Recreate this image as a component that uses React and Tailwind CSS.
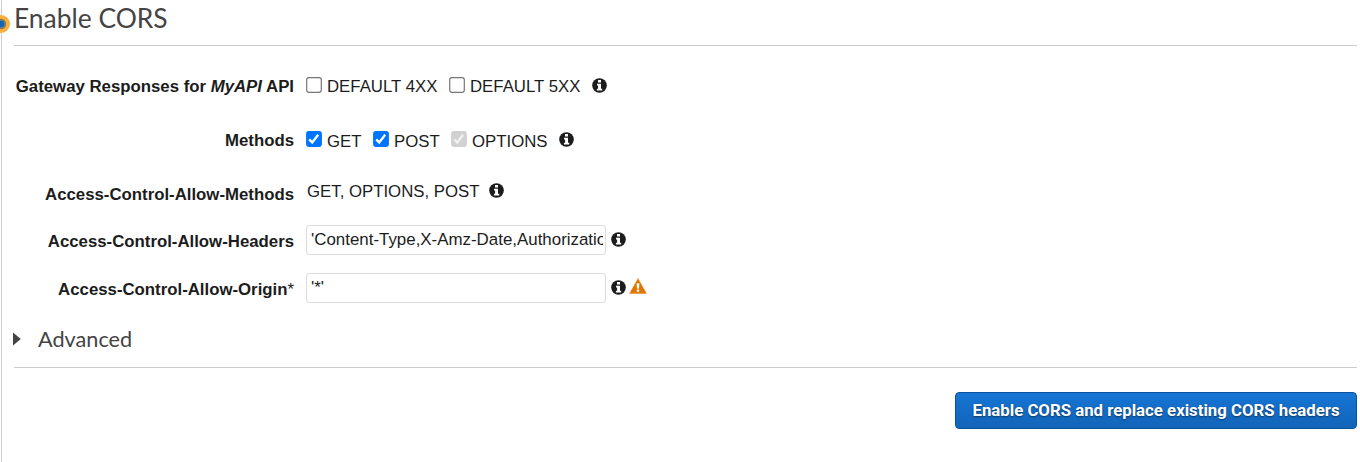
function InfoIcon({ className = "" }) {
  return (
    <svg viewBox="0 0 15 15" className={`size-[15px] shrink-0 ${className}`}>
      <circle cx="7.5" cy="7.5" r="7.3" fill="#1c1c1c" />
      <path d="M6 2.1h3v2.3H6zM5 5.7h4v5h1.2v1.9H4.9v-1.9h1.2V7.5H5z" fill="#fff" />
    </svg>
  );
}

function WarningIcon() {
  return (
    <svg viewBox="0 0 18 16" className="-mt-[6px] ml-[3px] h-4 w-[18px] shrink-0">
      <path d="M9 .4 17.4 15.6H.6z" fill="#e07700" stroke="#e07700" strokeWidth=".4" strokeLinejoin="round" />
      <path d="M7.6 5.3h2.8L10 10.6H8zM7.8 11.6h2.4v2.2H7.8z" fill="#fff" />
    </svg>
  );
}

function Check({ state = "off", className = "" }) {
  const fill = { off: "#fff", on: "#0075ff", disabled: "#d1d1d1" }[state];
  const edge = { off: "#767676", on: "#0075ff", disabled: "#d1d1d1" }[state];
  return (
    <svg viewBox="0 0 16 16" className={`size-4 shrink-0 ${className}`}>
      <rect x=".7" y=".7" width="14.6" height="14.6" rx="2.2" fill={fill} stroke={edge} strokeWidth="1.2" />
      {state !== "off" && (
        <path d="m3.2 8.4 3 3 6-7.6" fill="none" stroke={state === "on" ? "#fff" : "#f0f0f0"} strokeWidth="2.3" />
      )}
    </svg>
  );
}

function Row({ label, height, shift = "pt-0.5", children }) {
  return (
    <div className={`flex items-center ${height}`}>
      <div className={`w-[280px] shrink-0 text-right font-bold whitespace-nowrap ${shift}`}>{label}</div>
      <div className="ml-3 flex items-center">{children}</div>
    </div>
  );
}

function TextField({ children }) {
  return (
    <div className="-mt-0.5 mr-[5px] h-[30px] w-[300px] rounded-[3px] border border-[#ddd] pr-0.5 pl-1">
      <div className="overflow-hidden text-[16.9px] leading-[27px] whitespace-nowrap">{children}</div>
    </div>
  );
}

export default function App() {
  return (
    <div className="flex h-[462px] overflow-hidden bg-white pl-px font-['Liberation_Sans',Arial,sans-serif] text-[16.8px] leading-6 text-[#1c1c1c]">
      <div className="relative w-px shrink-0 bg-[#ccc]">
        <svg viewBox="0 0 20 20" className="absolute top-[14px] -left-[10px] size-5">
          <circle cx="10" cy="10" r="9" fill="#fbb03b" />
          <circle cx="10" cy="10" r="5.2" fill="#857b5d" />
          <circle cx="10" cy="10" r="3.3" fill="#1166bb" />
        </svg>
      </div>
      <main className="ml-3 w-[1343px] shrink-0">
        <h1 className="h-[46px] border-b border-[#ccc] pt-[2px] font-[Lato,sans-serif] text-[26.4px] leading-8 text-[#444]">
          Enable CORS
        </h1>
        <section className="pt-[13px]">
          <Row height="h-[54px]" label={<>Gateway Responses for <i>MyAPI</i> API</>}>
            <Check className="-mt-0.5 mr-[5px]" />
            <span className="w-[122px] pt-0.5">DEFAULT 4XX</span>
            <Check className="-mt-0.5 mr-[5px]" />
            <span className="w-[122px] pt-0.5">DEFAULT 5XX</span>
            <InfoIcon className="-mt-0.5" />
          </Row>
          <Row height="h-[54px]" label="Methods">
            <Check state="on" className="-mt-0.5 mr-[5px]" />
            <span className="w-[46px] pt-1">GET</span>
            <Check state="on" className="-mt-0.5 mr-[5px]" />
            <span className="w-[57px] pt-1">POST</span>
            <Check state="disabled" className="-mt-0.5 mr-[5px]" />
            <span className="w-[87px] pt-1">OPTIONS</span>
            <InfoIcon className="-mt-px" />
          </Row>
          <Row height="h-[50px]" shift="pt-1.5" label="Access-Control-Allow-Methods">
            <span className="w-[183px] pl-px">GET, OPTIONS, POST</span>
            <InfoIcon className="-mt-[3px]" />
          </Row>
          <Row height="h-[48px]" label="Access-Control-Allow-Headers">
            <TextField>'Content-Type,X-Amz-Date,Authorization,X-Api-Key,X-Amz-Security-Token'</TextField>
            <InfoIcon className="-mt-1" />
          </Row>
          <Row height="h-[48px]" label={<>Access-Control-Allow-Origin<span className="font-normal">*</span></>}>
            <TextField>'*'</TextField>
            <InfoIcon className="-mt-1" />
            <WarningIcon />
          </Row>
        </section>
        <div className="flex h-[55px] items-center border-b border-[#ccc] pb-0.5 font-[Lato,sans-serif] text-[21.7px] text-[#444]">
          <svg viewBox="0 0 8 14" className="-ml-px h-[14px] w-2">
            <path d="M0 .5 7.8 7 0 13.5z" fill="#444" />
          </svg>
          <span className="ml-[17px]">Advanced</span>
        </div>
        <div className="flex justify-end pt-6">
          <button className="h-[37px] w-[402px] rounded-[4px] border border-[#0b529c] bg-linear-to-b from-[#1675d5] to-[#1264b8] pb-0.5 font-[Roboto,sans-serif] text-[16.8px] font-bold whitespace-nowrap text-white [text-shadow:0_1px_2px_rgba(0,0,0,0.5)]">
            Enable CORS and replace existing CORS headers
          </button>
        </div>
      </main>
    </div>
  );
}
